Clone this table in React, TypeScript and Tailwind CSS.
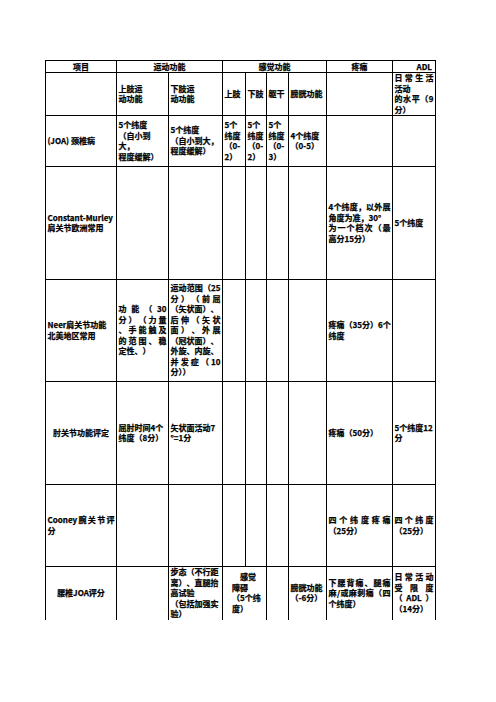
import React from 'react';

type L = string | [string, 'j'];

function Lines({ lines, className = '' }: { lines: L[]; className?: string }) {
  return (
    <div className={className}>
      {lines.map((l, i) => {
        if (typeof l === 'string')
          return (
            <div key={i} className="whitespace-pre">
              {l}
            </div>
          );
        const toks = (l[0].match(/[A-Za-z0-9\-=°\/.]+|\s+|./gu) ?? []).filter((t) => t.trim() !== '');
        return (
          <div key={i} className="flex justify-between whitespace-pre">
            {toks.map((t, k) => (
              <span key={k}>{t}</span>
            ))}
          </div>
        );
      })}
    </div>
  );
}

const td = 'border border-black p-0 pl-[1.5px] pr-[1.5px] align-middle';
const tdl = 'border border-b-0 border-black p-0 pl-[1.5px] pr-[1.5px] align-middle';

export default function App() {
  return (
    <div className="min-h-[702px] w-[496px] bg-white pt-[60px] pl-[45px] font-['Noto_Sans_CJK_SC',sans-serif] text-[8px] font-bold leading-[10.5px] text-black [-webkit-text-stroke:0.25px_black]">
      <table className="table-fixed border-collapse w-[390px]">
        <colgroup>
          <col className="w-[71px]" />
          <col className="w-[52px]" />
          <col className="w-[54px]" />
          <col className="w-[23px]" />
          <col className="w-[21px]" />
          <col className="w-[22px]" />
          <col className="w-[38px]" />
          <col className="w-[66px]" />
          <col className="w-[43px]" />
        </colgroup>
        <tbody>
          <tr className="h-[12px]">
            <td className={`${td} text-center leading-[10px]`}>项目</td>
            <td className={`${td} text-center leading-[10px]`} colSpan={2}>
              运动功能
            </td>
            <td className={`${td} text-center leading-[10px]`} colSpan={4}>
              感觉功能
            </td>
            <td className={`${td} text-center leading-[10px]`}>疼痛</td>
            <td className={`${td} text-right leading-[10px] pr-[3px]`}>ADL</td>
          </tr>
          <tr className="h-[42px]">
            <td className={td}></td>
            <td className={td}>
              <Lines lines={['上肢运', '动功能']} />
            </td>
            <td className={td}>
              <Lines lines={['下肢运', '动功能']} />
            </td>
            <td className={td}>上肢</td>
            <td className={td}>下肢</td>
            <td className={td}>躯干</td>
            <td className={td}>膀胱功能</td>
            <td className={td}></td>
            <td className={td}>
              <Lines lines={[['日常生活', 'j'], '活动', ['的水平（9', 'j'], '分）']} />
            </td>
          </tr>
          <tr className="h-[51px]">
            <td className={td}>(JOA) 颈椎病</td>
            <td className={td}>
              <Lines lines={['5个纬度', '（自小到', '大，', '程度缓解）']} />
            </td>
            <td className={td}>
              <Lines lines={['5个纬度', '（自小到大，', '程度缓解）']} />
            </td>
            <td className={td}>
              <Lines lines={['5个', '纬度', '（0-', '2）']} />
            </td>
            <td className={td}>
              <Lines lines={['5个', '纬度', '（0-', '2）']} />
            </td>
            <td className={td}>
              <Lines lines={['5个', '纬度', '（0-', '3）']} />
            </td>
            <td className={td}>
              <Lines lines={['4个纬度', '（0-5）']} />
            </td>
            <td className={td}></td>
            <td className={td}></td>
          </tr>
          <tr className="h-[113px]">
            <td className={td}>
              <Lines lines={['Constant-Murley', '肩关节欧洲常用']} />
            </td>
            <td className={td}></td>
            <td className={td}></td>
            <td className={td}></td>
            <td className={td}></td>
            <td className={td}></td>
            <td className={td}></td>
            <td className={td}>
              <Lines lines={[['4个纬度，以外展', 'j'], '角度为准，30°', ['为一个档次（最', 'j'], '高分15分）']} />
            </td>
            <td className={td}>5个纬度</td>
          </tr>
          <tr className="h-[102px]">
            <td className={td}>
              <Lines lines={['Neer肩关节功能', '北美地区常用']} />
            </td>
            <td className={td}>
              <Lines
                lines={[
                  ['功能（30', 'j'],
                  ['分）（力量', 'j'],
                  ['、手能触及', 'j'],
                  ['的范围、稳', 'j'],
                  '定性、）',
                ]}
              />
            </td>
            <td className={td}>
              <Lines
                lines={[
                  ['运动范围（25', 'j'],
                  ['分）（前屈', 'j'],
                  '（矢状面）、',
                  ['后伸（矢状', 'j'],
                  ['面）、外展', 'j'],
                  '（冠状面）、',
                  '外旋、内旋、',
                  ['并发症（10', 'j'],
                  '分））',
                ]}
              />
            </td>
            <td className={td}></td>
            <td className={td}></td>
            <td className={td}></td>
            <td className={td}></td>
            <td className={td}>
              <Lines lines={['疼痛（35分）6个', '纬度']} />
            </td>
            <td className={td}></td>
          </tr>
          <tr className="h-[103px]">
            <td className={`${td} text-center`}>肘关节功能评定</td>
            <td className={td}>
              <Lines lines={['屈肘时间4个', '纬度（8分）']} />
            </td>
            <td className={td}>
              <Lines lines={['矢状面活动7', '°=1分']} />
            </td>
            <td className={td}></td>
            <td className={td}></td>
            <td className={td}></td>
            <td className={td}></td>
            <td className={td}>疼痛（50分）</td>
            <td className={td}>
              <Lines lines={['5个纬度12', '分']} />
            </td>
          </tr>
          <tr className="h-[82px]">
            <td className={td}>
              <Lines lines={[['Cooney 腕关节评', 'j'], '分']} />
            </td>
            <td className={td}></td>
            <td className={td}></td>
            <td className={td}></td>
            <td className={td}></td>
            <td className={td}></td>
            <td className={td}></td>
            <td className={td}>
              <Lines lines={[['四个纬度疼痛', 'j'], '（25分）']} />
            </td>
            <td className={td}>
              <Lines lines={[['四个纬度', 'j'], '（25分）']} />
            </td>
          </tr>
          <tr className="h-[45px]">
            <td className={`${tdl} text-center`}>腰椎JOA评分</td>
            <td className={tdl}></td>
            <td className={tdl}>
              <Lines lines={['步态（不行距', '离）、直腿抬', '高试验', '（包括加强实', '验）']} />
            </td>
            <td className={`${tdl} pl-[9px]`} colSpan={2}>
              <Lines lines={['\u3000感觉', '障碍', '（5个纬', '度）']} />
            </td>
            <td className={tdl}></td>
            <td className={tdl}>
              <Lines lines={['膀胱功能', '（-6分）']} />
            </td>
            <td className={tdl}>
              <Lines lines={[['下腰背痛、腿痛', 'j'], ['麻/或麻刺痛（四', 'j'], '个纬度）']} />
            </td>
            <td className={tdl}>
              <Lines lines={[['日常活动', 'j'], ['受限度', 'j'], ['（ ADL ）', 'j'], '（14分）']} />
            </td>
          </tr>
        </tbody>
      </table>
    </div>
  );
}
